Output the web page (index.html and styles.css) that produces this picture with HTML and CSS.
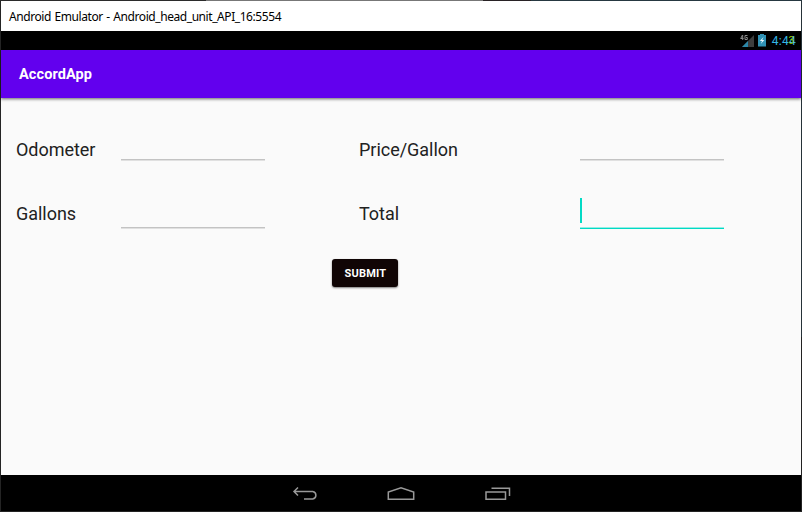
FILE: index.html
```html
<!DOCTYPE html>
<html lang="en">
<head>
<meta charset="utf-8">
<title>Android Emulator</title>
<link rel="stylesheet" href="styles.css">
</head>
<body>
<div class="window">
  <header class="titlebar"><span class="window-title">Android Emulator - Android_head_unit_API_16:5554</span></header>
  <div class="statusbar">
    <svg class="signal" width="15" height="14" viewBox="0 0 15 14">
      <path d="M14 1V13H2Z" fill="#3d3d3d"/>
      <path d="M8 7V13H2Z" fill="#2b87a8"/>
      <path d="M2.500 1L.7 4.500H3.500M2.700 1V6M7.500 1.500H5V5.500H7.300V3.500H6" fill="none" stroke="#8a8a8a" stroke-width="1"/>
    </svg>
    <svg class="battery" width="8" height="13" viewBox="0 0 8 13">
      <path d="M2 0H6V1H8V12.500H0V1H2Z" fill="#3092b5"/>
      <path d="M5.500 3L1.800 7H4L2.800 10L6.300 6H4.200Z" fill="#e8f8ff"/>
    </svg>
    <span class="clock">4:44<span class="clock-overlay">3</span></span>
  </div>
  <div class="appbar"><h1 class="app-title">AccordApp</h1></div>
  <main class="content">
    <form class="form">
      <div class="row">
        <label class="label">Odometer</label><span class="field"></span>
        <label class="label">Price/Gallon</label><span class="field"></span>
      </div>
      <div class="row row-second">
        <label class="label">Gallons</label><span class="field"></span>
        <label class="label">Total</label><span class="field field-active"><span class="cursor"></span></span>
      </div>
      <button class="submit" type="button">SUBMIT</button>
    </form>
  </main>
  <nav class="navbar">
    <svg width="26" height="16" viewBox="0 0 26 16"><path d="M7 1.500L3 5.500L7 9.500M3 5.500H21.700A3.800 3.800 0 0 1 21.700 13H13" /></svg>
    <svg width="28" height="16" viewBox="0 0 28 16"><path d="M1.300 13.200V6L14 1.800L26.700 6V13.200Z"/></svg>
    <svg width="26" height="16" viewBox="0 0 26 16"><path d="M1 6H20.500V13.200H1ZM6.500 2.200H24.500V10"/></svg>
  </nav>
</div>
</body>
</html>
```
FILE: styles.css
```css
* { box-sizing: border-box; }
body {
  margin: 0;
  width: 802px;
  height: 512px;
  padding: 1px;
  overflow: hidden;
  font-family: Roboto, sans-serif;
  background:
    linear-gradient(90deg, #2b2b2b 206px, #777 206px 483px, #282225 483px 531px, #263841 531px) top / 100% 1px no-repeat,
    linear-gradient(#263238 337px, #222 337px) right / 1px 100% no-repeat,
    #242424;
}
.window { width: 800px; height: 510px; display: flex; flex-direction: column; background: #fafafa; }
.titlebar { height: 30px; padding-left: 8px; background: #fff; line-height: 29px; }
.window-title { font-family: "Noto Sans", sans-serif; font-size: 12px; color: #000; letter-spacing: -0.43px; word-spacing: .9px; white-space: nowrap; }
.statusbar { height: 19px; padding-right: 5px; background: #000; display: flex; justify-content: flex-end; align-items: center; }
.signal { margin-right: 3px; }
.battery { margin-right: 6px; }
.clock { position: relative; top: 1px; font-size: 12px; line-height: 19px; letter-spacing: .25px; color: #33b5e5; }
.clock-overlay { position: absolute; right: 2px; top: -1px; font-size: 10px; letter-spacing: 0; color: #99cc00; }
.appbar { height: 48px; padding-left: 18px; display: flex; align-items: center; background: #6200ee; box-shadow: 0 1px 3px rgba(0, 0, 0, .6); z-index: 1; }
.app-title { margin: 0; padding-top: 2px; font-size: 14.5px; font-weight: 700; line-height: 46px; letter-spacing: .1px; color: #fff; }
.content { flex: 1; padding: 36px 0 0 15px; }
.form { display: flex; flex-direction: column; }
.row { display: grid; grid-template-columns: 105px 238px 221px 144px; height: 64px; align-items: start; }
.label { font-size: 18px; line-height: 32px; color: #212121; letter-spacing: -.03px; }
.field { width: 144px; height: 27px; border-bottom: 1px solid #e0e0e0; box-shadow: inset 0 -1px #c3c3c3; }
.row-second .field { height: 31px; }
.field.field-active { border-color: #00dac5; box-shadow: inset 0 -1px #94eee4; }
.cursor { display: block; width: 2px; height: 25px; background: #03dac5; }
.submit { width: 66px; height: 28px; margin: -3px 0 0 316px; padding: 1px 0 0 1px; border: 0; border-radius: 3px; background: #100505; color: #fff; font: 700 11px/27px Roboto, sans-serif; letter-spacing: .2px; box-shadow: 0 1px 2px rgba(0, 0, 0, .5); }
.navbar { height: 36px; padding-top: 11px; background: #000; display: flex; justify-content: center; gap: 70px; }
.navbar svg { fill: none; stroke: #999; stroke-width: 1.5; }
```
